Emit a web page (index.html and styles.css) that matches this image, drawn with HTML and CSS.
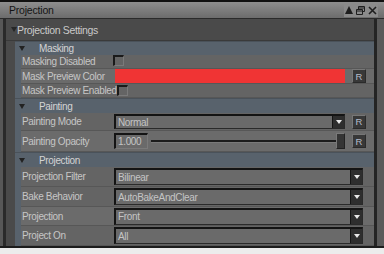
FILE: index.html
```html
<!DOCTYPE html>
<html>
<head>
<meta charset="utf-8">
<link rel="stylesheet" href="styles.css">
</head>
<body>
<div class="window">
  <div class="titlebar">
    <span class="title">Projection</span>
    <div class="ctrls">
      <svg width="8" height="8" viewBox="0 0 8 8"><path d="M0 8 L4 0 L8 8 Z" fill="#1e1e1e"/></svg>
      <svg width="9" height="9" viewBox="0 0 9 9"><path d="M2.5 0.5 H8.5 V5.5 H6.5 M0.5 3.5 H6.5 V8.5 H0.5 Z M0.5 5 H6.5 M2.5 0.5 V3.5 M2.5 2 H8.5" fill="none" stroke="#1e1e1e" stroke-width="1"/></svg>
      <svg width="9" height="9" viewBox="0 0 9 9"><path d="M1 1 L8 8 M8 1 L1 8" stroke="#1e1e1e" stroke-width="1.6"/></svg>
    </div>
  </div>
  <div class="frame">
    <div class="content">
      <div class="sethead"><span class="tri"></span>Projection Settings</div>
      <div class="group">
        <div class="ghead"><span class="gtri"></span>Masking</div>
        <div class="rows">
          <div class="row h14 dark"><div class="lbl">Masking Disabled</div><div class="val"><span class="chk"></span></div></div>
          <div class="row h15 light"><div class="lbl">Mask Preview Color</div><div class="val"><div class="swatch"></div><span class="rbtn">R</span></div></div>
          <div class="row h14 dark"><div class="lbl">Mask Preview Enabled</div><div class="val"><span class="chk chk2"></span></div></div>
        </div>
        <div class="ghead h15"><span class="gtri"></span>Painting</div>
        <div class="rows">
          <div class="row h18 dark"><div class="lbl">Painting Mode</div><div class="val"><div class="dd dd-sm"><span class="ddtext">Normal</span><span class="ddarrow"></span></div><span class="rbtn">R</span></div></div>
          <div class="row h21 light"><div class="lbl">Painting Opacity</div><div class="val"><div class="num">1.000</div><div class="slider"><div class="track"></div><div class="handle"></div></div><span class="rbtn">R</span></div></div>
        </div>
        <div class="ghead h15"><span class="gtri"></span>Projection</div>
        <div class="rows">
          <div class="row h20 dark"><div class="lbl">Projection Filter</div><div class="val wide"><div class="dd"><span class="ddtext">Bilinear</span><span class="ddarrow"></span></div></div></div>
          <div class="row h20 dark"><div class="lbl">Bake Behavior</div><div class="val wide"><div class="dd"><span class="ddtext">AutoBakeAndClear</span><span class="ddarrow"></span></div></div></div>
          <div class="row h19 light"><div class="lbl">Projection</div><div class="val wide"><div class="dd"><span class="ddtext">Front</span><span class="ddarrow"></span></div></div></div>
          <div class="row h20 dark"><div class="lbl">Project On</div><div class="val wide"><div class="dd"><span class="ddtext">All</span><span class="ddarrow"></span></div></div></div>
        </div>
      </div>
    </div>
  </div>
</div>
</body>
</html>
```

FILE: styles.css
```css
* { box-sizing: border-box; }
html, body { margin: 0; padding: 0; }
body {
  background: #ececec;
  width: 384px;
  height: 254px;
  overflow: hidden;
  font-family: "Liberation Sans", Arial, sans-serif;
  font-size: 10px;
  letter-spacing: -0.35px;
}
.window {
  border-top: 2px solid #111;
  border-bottom: 2px solid #1c1c1c;
  display: flex;
  flex-direction: column;
  height: 248px;
}
.titlebar {
  height: 17px;
  background: linear-gradient(#8e8e8e, #6c6c6c);
  border-bottom: 1px solid #2a2a2a;
  display: flex;
  align-items: center;
  justify-content: space-between;
  padding: 0 6px 0 9px;
  color: #141414;
  font-size: 10.5px;
  letter-spacing: -0.2px;
}
.ctrls {
  display: flex;
  align-items: center;
  gap: 3px;
  background: #8a8a8a;
  padding: 2px 1px;
}
.frame {
  flex: 1;
  display: flex;
  border-left: 3px solid #575757;
  border-right: 7px solid #5a5a5a;
  overflow: hidden;
}
.content {
  flex: 1;
  background: #4a4a4a;
  border-left: 3px solid #2a2a2a;
  border-right: 3px solid #242424;
  display: flex;
  flex-direction: column;
}
.sethead {
  height: 22px;
  display: flex;
  align-items: center;
  padding-left: 5px;
  color: #c9c9c9;
  font-size: 10.5px;
  border-bottom: 1px solid #3a3a3a;
  padding-top: 1px;
}
.tri {
  width: 0; height: 0;
  border-left: 3px solid transparent;
  border-right: 3px solid transparent;
  border-top: 5px solid #262626;
  margin-right: 0px;
  margin-top: -2px;
}
.group {
  margin-left: 9px;
  background: #58626c;
  display: flex;
  flex-direction: column;
  flex: 1;
}
.ghead {
  height: 14px;
  display: flex;
  align-items: center;
  background: #58626c;
  color: #d4d4d4;
  padding-left: 4px;
  border-top: 1px solid #4a525a;
}
.ghead.h15 { height: 15px; }
.gtri {
  width: 0; height: 0;
  border-left: 3px solid transparent;
  border-right: 3px solid transparent;
  border-top: 5px solid #222;
  margin-right: 14px;
}
.rows {
  margin-left: 6px;
  display: flex;
  flex-direction: column;
}
.row {
  display: flex;
  align-items: center;
  border-bottom: 1px solid #575757;
}
.row.dark { background: #646464; }
.row.light { background: #6b6b6b; }
.h14 { height: 14px; }
.h15 { height: 15px; }
.h18 { height: 18px; }
.h19 { height: 19px; }
.h20 { height: 20px; }
.h21 { height: 21px; }
.lbl {
  width: 93px;
  padding-left: 1px;
  color: #c6c6c6;
  white-space: nowrap;
  align-self: stretch;
  display: flex;
  align-items: center;
}
.val {
  flex: 1;
  display: flex;
  align-items: center;
  gap: 7px;
  padding-right: 8px;
  align-self: stretch;
}
.val.wide { padding-right: 11px; }
.chk {
  width: 11px;
  height: 11px;
  border-top: 2px solid #1a1a1a;
  border-left: 2px solid #1a1a1a;
  border-right: 1px solid #7a7a7a;
  border-bottom: 1px solid #7a7a7a;
  margin-left: -1px;
  align-self: flex-start;
}
.chk2 { margin-left: 3px; align-self: center; }
.swatch {
  flex: 1;
  height: 14px;
  background: #f03434;
  margin-left: 1px;
}
.rbtn {
  width: 14px;
  height: 14px;
  background: #383838;
  border: 1px solid #777;
  border-right-color: #2a2a2a;
  border-bottom-color: #2a2a2a;
  color: #b4bccb;
  font-size: 9.5px;
  display: flex;
  align-items: center;
  justify-content: center;
  letter-spacing: 0;
}
.dd {
  flex: 1;
  height: 17px;
  background: #6a6a6a;
  border-top: 2px solid #141414;
  border-left: 2px solid #141414;
  border-right: 1px solid #2a2a2a;
  border-bottom: 1px solid #2a2a2a;
  display: flex;
  align-items: center;
  justify-content: space-between;
}
.dd-sm { height: 15px; }
.ddtext {
  color: #c4c4c4;
  padding-left: 2px;
}
.ddarrow {
  width: 12px;
  align-self: stretch;
  background: #2e2e2e;
  border-left: 1px solid #151515;
  position: relative;
}
.ddarrow::after {
  content: "";
  position: absolute;
  left: 3px;
  top: 50%;
  margin-top: -2px;
  border-left: 3px solid transparent;
  border-right: 3px solid transparent;
  border-top: 4px solid #e8e8e8;
}
.num {
  width: 34px;
  height: 16px;
  border-top: 2px solid #141414;
  border-left: 2px solid #141414;
  border-right: 1px solid #7a7a7a;
  border-bottom: 1px solid #7a7a7a;
  background: #6a6a6a;
  color: #c4c4c4;
  display: flex;
  align-items: center;
  padding-left: 2px;
}
.slider {
  flex: 1;
  height: 16px;
  display: flex;
  align-items: center;
  margin-left: -4px;
}
.track {
  flex: 1;
  height: 2px;
  background: #1c1c1c;
  border-bottom: 1px solid #7a7a7a;
  box-sizing: content-box;
}
.handle {
  width: 9px;
  height: 16px;
  background: #353535;
  border: 1px solid #7a7a7a;
  border-right-color: #222;
  border-bottom-color: #222;
}
```
